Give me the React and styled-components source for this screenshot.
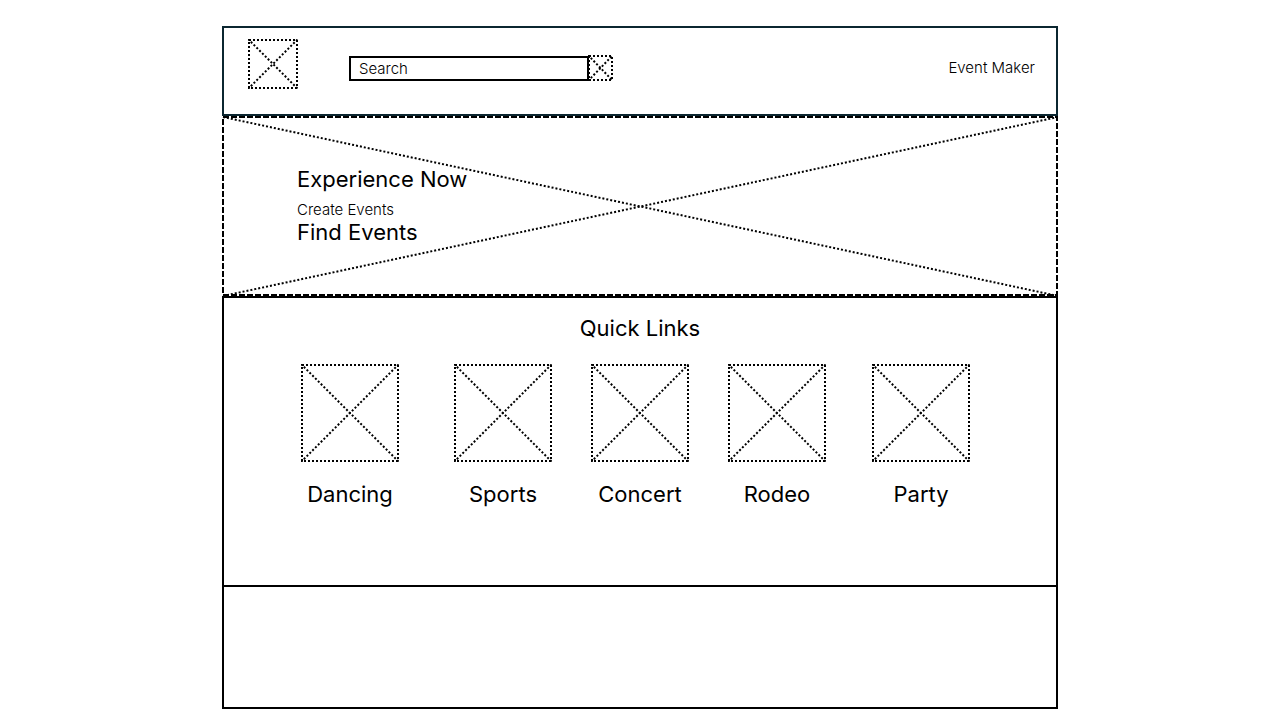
import React from "react";
import styled, { createGlobalStyle } from "styled-components";

const GlobalStyle = createGlobalStyle`
  * { box-sizing: border-box; }
  body {
    margin: 0;
    background: #fff;
    color: #000;
    font-family: Inter, "Liberation Sans", sans-serif;
    font-size: 15px;
    font-weight: 300;
    line-height: 20px;
  }
`;

const Page = styled.div`
  max-width: 836px;
  margin: 26px auto 0;
`;

const Header = styled.header`
  display: flex;
  align-items: flex-start;
  height: 90px;
  padding: 11px 21px 0 24px;
  border: 2px solid #0b2630;
`;

const LogoLink = styled.a`
  display: block;
  margin-right: 51px;
`;

const SearchForm = styled.form`
  display: flex;
  align-items: flex-end;
  margin-top: 16px;
`;

const SearchInput = styled.input`
  width: 240px;
  height: 25px;
  padding: 0 8px;
  border: 2px solid #000;
  border-radius: 0;
  background: #fff;
  color: inherit;
  font: inherit;
  outline: none;

  &::placeholder {
    color: #000;
    opacity: 1;
  }
`;

const SearchButton = styled.button`
  margin: 0 0 0 -1px;
  padding: 0;
  border: 0;
  background: none;
`;

const HeaderLink = styled.a`
  margin: 19px 0 0 auto;
  color: inherit;
  text-decoration: none;
`;

const Drawing = styled.svg`
  display: block;
  flex: none;
  fill: none;
  stroke: #000;
  stroke-width: 2px;
  stroke-dasharray: 2 2;
`;

const Outline = styled.rect`
  width: calc(100% - 2px);
  height: calc(100% - 2px);
  stroke-dasharray: ${(p) => p.$dash};
`;

const Hero = styled.section`
  position: relative;
  height: 180px;
  padding: 48px 75px 0;
`;

const HeroBackdrop = styled(Drawing)`
  position: absolute;
  inset: 0;
`;

const HeroContent = styled.div`
  position: relative;
  display: flex;
  flex-direction: column;
  align-items: flex-start;
`;

const HeroTitle = styled.h1`
  margin: 0 0 6px;
  font-size: 22px;
  font-weight: 400;
  line-height: 30px;
`;

const HeroLink = styled.a`
  color: inherit;
  text-decoration: none;
  font-size: ${(p) => (p.$large ? "22px" : "15px")};
  font-weight: ${(p) => (p.$large ? 400 : 300)};
  line-height: ${(p) => (p.$large ? "24px" : "20px")};
`;

const QuickLinks = styled.section`
  min-height: 291px;
  padding: 15px 77px 0;
  border: 2px solid #000;
`;

const SectionTitle = styled.h2`
  margin: 0 0 21px;
  font-size: 22px;
  font-weight: 400;
  line-height: 30px;
  text-align: center;
`;

const LinkGrid = styled.nav`
  display: grid;
  grid-template-columns: 153fr 137fr 137fr 144fr 107fr;
`;

const Category = styled.a`
  width: 98px;
  color: inherit;
  text-decoration: none;
  text-align: center;
  font-size: 22px;
  font-weight: 400;
  line-height: 30px;
`;

const CategoryName = styled.span`
  display: block;
  margin-top: 17px;
`;

const Footer = styled.footer`
  height: 122px;
  border: 2px solid #000;
  border-top: 0;
`;

const categories = ["Dancing", "Sports", "Concert", "Rodeo", "Party"];

function Crossed({ as: Root = Drawing, width, height, dash = "2 2", start = 0 }) {
  return (
    <Root width={width} height={height} aria-hidden="true">
      <Outline x="1" y="1" $dash={dash} />
      <line x1={start} y1={start} x2="100%" y2="100%" />
      <line x1={start} y1="100%" x2="100%" y2={start} />
    </Root>
  );
}

export default function App() {
  return (
    <>
      <GlobalStyle />
      <Page>
        <Header>
          <LogoLink href="#home" aria-label="Home">
            <Crossed width="50" height="50" />
          </LogoLink>
          <SearchForm role="search" onSubmit={(e) => e.preventDefault()}>
            <SearchInput type="text" placeholder="Search" aria-label="Search" />
            <SearchButton type="submit" aria-label="Submit search">
              <Crossed width="25" height="26" />
            </SearchButton>
          </SearchForm>
          <HeaderLink href="#maker">Event Maker</HeaderLink>
        </Header>
        <main>
          <Hero>
            <Crossed as={HeroBackdrop} width="100%" height="100%" dash="6 2" start={1} />
            <HeroContent>
              <HeroTitle>Experience Now</HeroTitle>
              <HeroLink href="#create">Create Events</HeroLink>
              <HeroLink href="#find" $large>Find Events</HeroLink>
            </HeroContent>
          </Hero>
          <QuickLinks>
            <SectionTitle>Quick Links</SectionTitle>
            <LinkGrid aria-label="Quick Links">
              {categories.map((name) => (
                <Category key={name} href={"#" + name.toLowerCase()}>
                  <Crossed width="98" height="98" />
                  <CategoryName>{name}</CategoryName>
                </Category>
              ))}
            </LinkGrid>
          </QuickLinks>
        </main>
        <Footer />
      </Page>
    </>
  );
}
